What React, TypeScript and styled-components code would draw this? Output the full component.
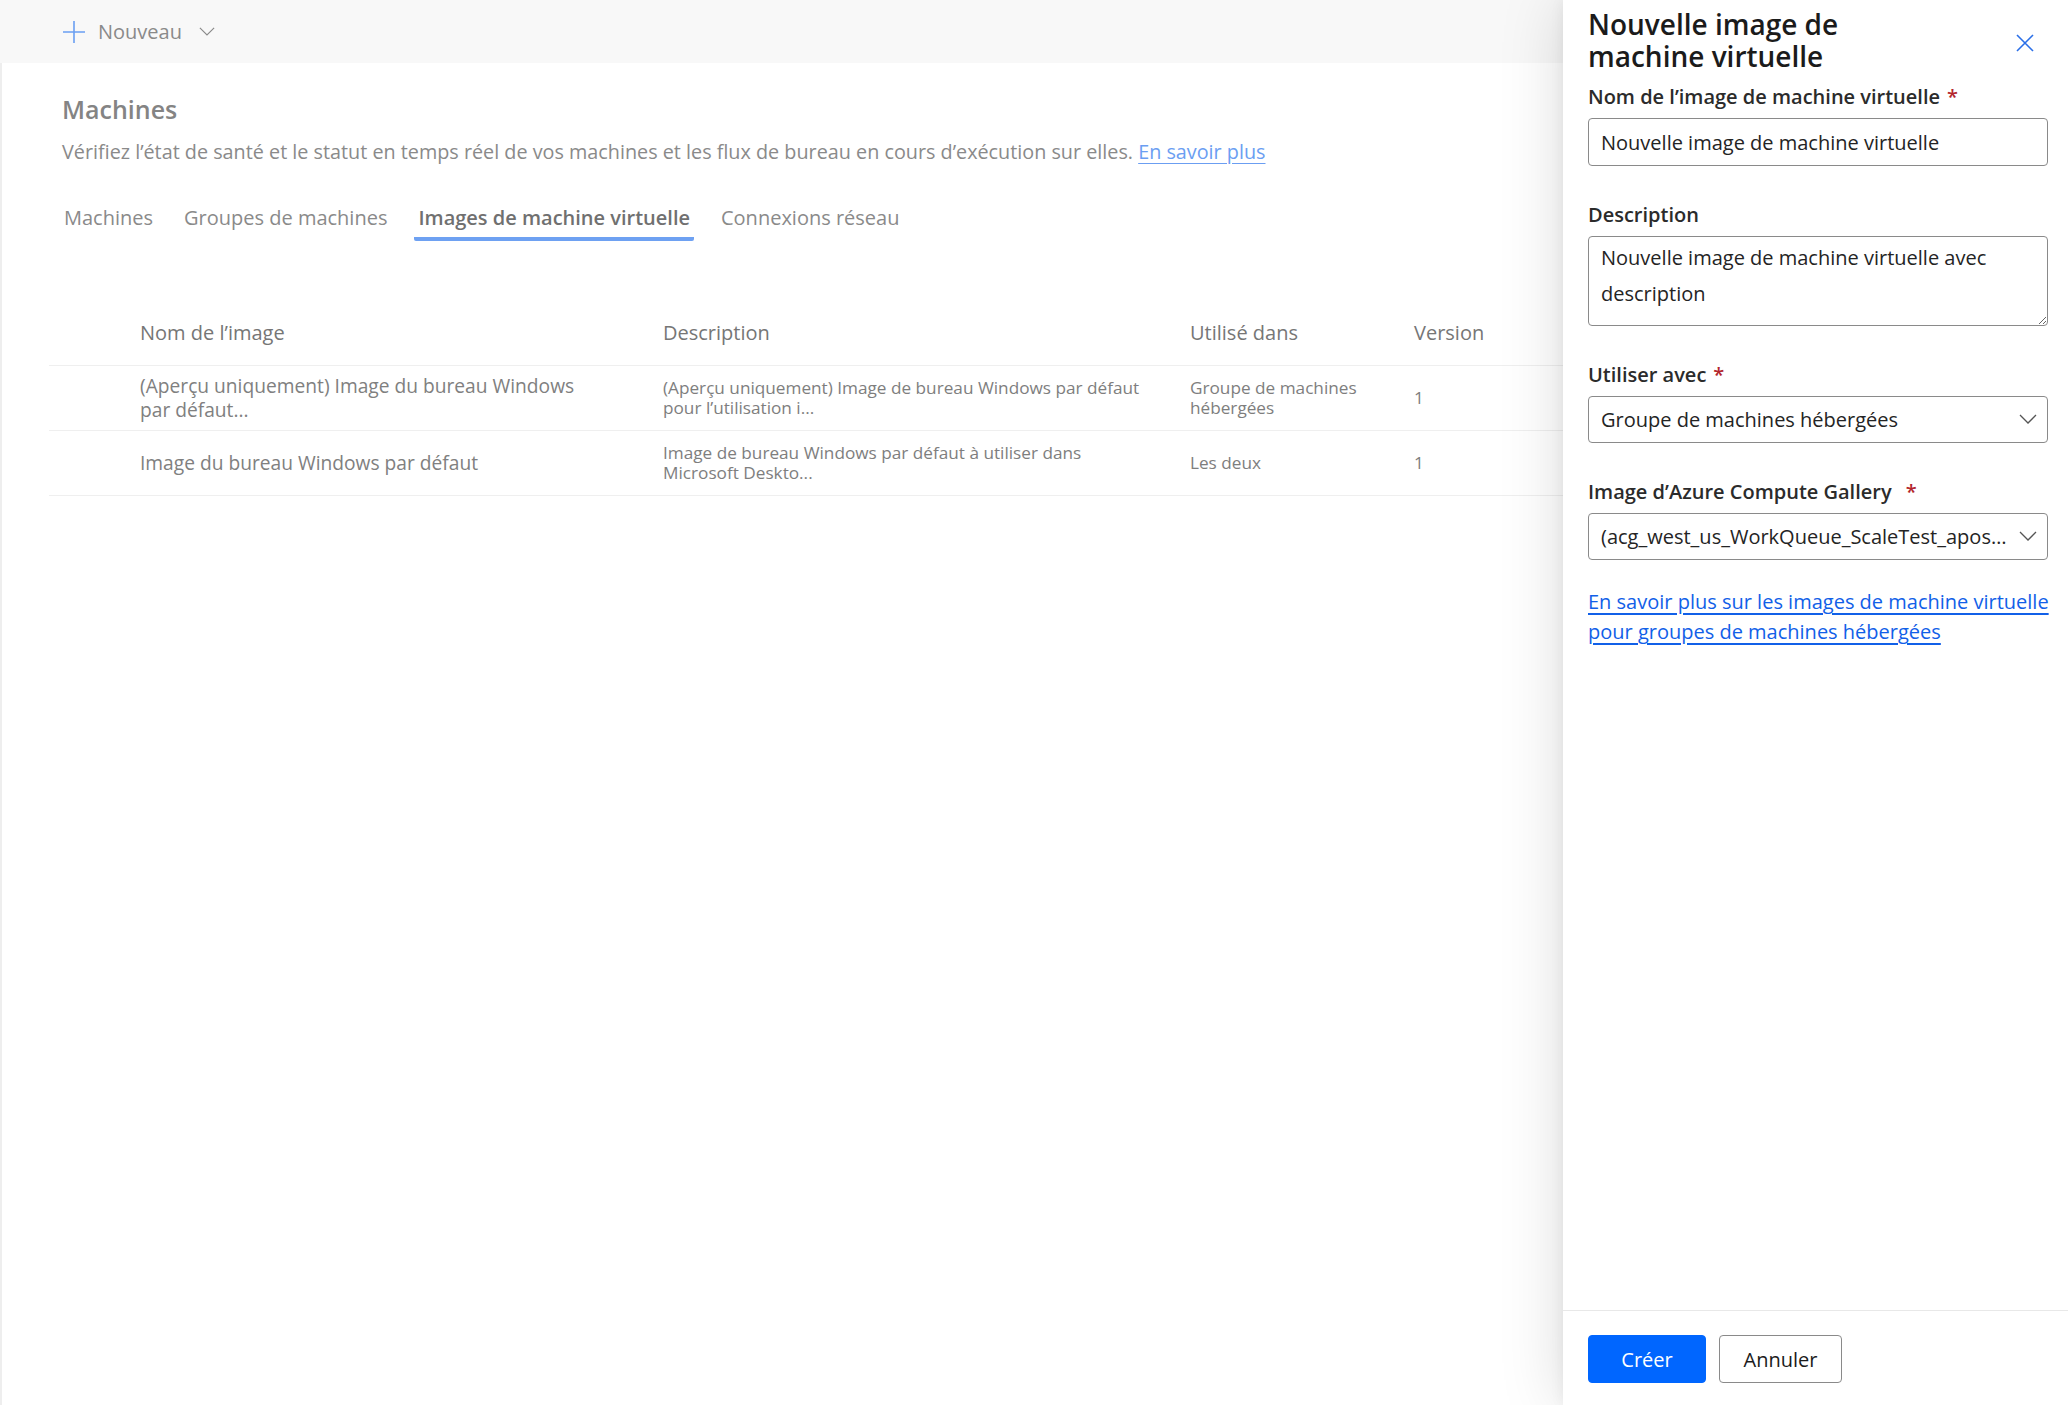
import styled, { createGlobalStyle } from "styled-components";

const GlobalStyle = createGlobalStyle`
  html, body {
    margin: 0;
    padding: 0;
  }
  body {
    font-family: "Open Sans", "Noto Sans", sans-serif;
    background: #ffffff;
    overflow: hidden;
  }
  * {
    box-sizing: border-box;
  }
`;

const Page = styled.div`
  position: relative;
  width: 2068px;
  height: 1405px;
  overflow: hidden;
  display: flex;
  flex-direction: column;
`;

const CommandBar = styled.div`
  height: 63px;
  flex-shrink: 0;
  background: #f8f8f8;
  display: flex;
  align-items: center;
  padding-left: 62px;
`;

const NewButton = styled.button`
  display: flex;
  align-items: center;
  gap: 12px;
  background: none;
  border: none;
  padding: 0;
  font-family: inherit;
  font-size: 20px;
  color: #8a8a8a;
  cursor: pointer;
  svg:last-child {
    margin-left: 5px;
  }
`;

const Content = styled.main`
  flex: 1;
  border-left: 2px solid #eeeeee;
  padding: 28px 0 0 47px;
`;

const Heading = styled.h1`
  margin: 0;
  padding-left: 13px;
  font-size: 25px;
  line-height: 36px;
  font-weight: 600;
  color: #848484;
`;

const Intro = styled.p`
  margin: 10px 0 0;
  padding-left: 13px;
  font-size: 19.8px;
  line-height: 30px;
  color: #8a8a8a;
  a {
    color: #6b9ef2;
    text-decoration: underline;
    text-underline-offset: 4px;
  }
`;

const Tabs = styled.nav`
  display: flex;
  gap: 23px;
  margin-top: 36px;
  padding-left: 11px;
`;

const Tab = styled.div<{ $active?: boolean }>`
  padding: 0 4px 4px;
  font-size: 20px;
  line-height: 30px;
  font-weight: ${(p) => (p.$active ? 600 : 400)};
  color: ${(p) => (p.$active ? "#707070" : "#8a8a8a")};
  border-bottom: 4px solid ${(p) => (p.$active ? "#6ea1f2" : "transparent")};
  border-radius: 0 0 2px 2px;
`;

const Table = styled.div`
  margin-top: 59px;
`;

const Row = styled.div<{ $head?: boolean }>`
  display: grid;
  grid-template-columns: 91px 523px 527px 224px 1fr;
  align-items: center;
  height: ${(p) => (p.$head ? "66px" : "65px")};
  border-bottom: 1px solid #efefef;
`;

const HeadCell = styled.div`
  font-size: 20px;
  font-weight: 500;
  color: #767676;
`;

const NameCell = styled.div`
  font-size: 19.2px;
  line-height: 24px;
  color: #808080;
`;

const SmallCell = styled.div`
  font-size: 17.2px;
  line-height: 20px;
  color: #7e7e7e;
`;

const Panel = styled.aside`
  position: absolute;
  top: 0;
  right: 0;
  bottom: 0;
  width: 505px;
  background: #ffffff;
  box-shadow: 0 0 60px rgba(0, 0, 0, 0.15), 0 0 14px rgba(0, 0, 0, 0.06);
  display: flex;
  flex-direction: column;
`;

const PanelHeader = styled.div`
  display: flex;
  align-items: flex-start;
  justify-content: space-between;
  padding: 8px 30px 0 25px;
`;

const PanelTitle = styled.h2`
  margin: 0;
  font-size: 28px;
  line-height: 32px;
  font-weight: 600;
  color: #1b1b1b;
`;

const CloseButton = styled.button`
  margin-top: 22px;
  background: none;
  border: none;
  padding: 4px;
  cursor: pointer;
  display: flex;
`;

const PanelBody = styled.div`
  flex: 1;
  padding: 11px 20px 0 25px;
  display: flex;
  flex-direction: column;
  gap: 35px;
`;

const Field = styled.div`
  display: flex;
  flex-direction: column;
  gap: 7px;
`;

const Label = styled.label<{ $starGap?: number }>`
  font-size: 20px;
  line-height: 28px;
  font-weight: 600;
  color: #2b2b2b;
  span {
    color: #b3262d;
    margin-left: ${(p) => p.$starGap ?? 7}px;
  }
`;

const TextInput = styled.input`
  height: 48px;
  border: 1px solid #8a8a8a;
  border-radius: 4px;
  padding: 0 12px;
  font-family: inherit;
  font-size: 20px;
  color: #242424;
  outline: none;
`;

const TextArea = styled.textarea`
  height: 90px;
  border: 1px solid #8a8a8a;
  border-radius: 4px;
  padding: 3px 12px;
  font-family: inherit;
  font-size: 20px;
  line-height: 36px;
  color: #242424;
  resize: vertical;
  outline: none;
`;

const Select = styled.div`
  height: 47px;
  border: 1px solid #8a8a8a;
  border-radius: 4px;
  padding: 0 10px 0 12px;
  display: flex;
  align-items: center;
  justify-content: space-between;
  gap: 10px;
  font-size: 20px;
  color: #242424;
  span {
    white-space: nowrap;
    overflow: hidden;
    text-overflow: ellipsis;
  }
  svg {
    flex-shrink: 0;
  }
`;

const HelpLink = styled.a`
  margin: -8px -10px 0 0;
  font-size: 20px;
  line-height: 30px;
  color: #1160e8;
  text-decoration: underline;
  text-underline-offset: 4px;
`;

const PanelFooter = styled.div`
  height: 95px;
  border-top: 1px solid #e8e8e8;
  padding: 24px 25px 0;
  display: flex;
  gap: 13px;
`;

const Button = styled.button<{ $primary?: boolean }>`
  height: 48px;
  min-width: ${(p) => (p.$primary ? "118px" : "123px")};
  border-radius: 4px;
  border: 1px solid ${(p) => (p.$primary ? "#0066ff" : "#8a8a8a")};
  background: ${(p) => (p.$primary ? "#0066ff" : "#ffffff")};
  color: ${(p) => (p.$primary ? "#ffffff" : "#1b1b1b")};
  font-family: inherit;
  font-size: 20px;
  padding: 0 18px;
  cursor: pointer;
`;

const PlusIcon = () => (
  <svg width="24" height="24" viewBox="0 0 24 24">
    <path d="M12 1v22M1 12h22" stroke="#6a9ff2" strokeWidth="1.6" fill="none" />
  </svg>
);

const Chevron = ({ color, size }: { color: string; size: number }) => (
  <svg width={size} height={size * 0.56} viewBox="0 0 18 10">
    <path d="M1 1l8 8 8-8" stroke={color} strokeWidth="1.3" fill="none" />
  </svg>
);

const CloseIcon = () => (
  <svg width="18" height="18" viewBox="0 0 18 18">
    <path d="M1 1l16 16M17 1L1 17" stroke="#2a6fe8" strokeWidth="1.6" fill="none" />
  </svg>
);

const images = [
  {
    name: ["(Aperçu uniquement) Image du bureau Windows", "par défaut..."],
    description: ["(Aperçu uniquement) Image de bureau Windows par défaut", "pour l’utilisation i..."],
    usedIn: ["Groupe de machines", "hébergées"],
    version: "1",
  },
  {
    name: ["Image du bureau Windows par défaut"],
    description: ["Image de bureau Windows par défaut à utiliser dans", "Microsoft Deskto..."],
    usedIn: ["Les deux"],
    version: "1",
  },
];

const Lines = ({ lines }: { lines: string[] }) => (
  <>
    {lines.map((l, i) => (
      <div key={i}>{l}</div>
    ))}
  </>
);

export default function App() {
  return (
    <>
      <GlobalStyle />
      <Page>
        <CommandBar>
          <NewButton>
            <PlusIcon />
            Nouveau
            <Chevron color="#8a8a8a" size={16} />
          </NewButton>
        </CommandBar>
        <Content>
          <Heading>Machines</Heading>
          <Intro>
            Vérifiez l’état de santé et le statut en temps réel de vos machines et les flux de bureau en cours
            d’exécution sur elles. <a href="#">En savoir plus</a>
          </Intro>
          <Tabs>
            <Tab>Machines</Tab>
            <Tab>Groupes de machines</Tab>
            <Tab $active>Images de machine virtuelle</Tab>
            <Tab>Connexions réseau</Tab>
          </Tabs>
          <Table>
            <Row $head>
              <div />
              <HeadCell>Nom de l’image</HeadCell>
              <HeadCell>Description</HeadCell>
              <HeadCell>Utilisé dans</HeadCell>
              <HeadCell>Version</HeadCell>
            </Row>
            {images.map((img, i) => (
              <Row key={i}>
                <div />
                <NameCell>
                  <Lines lines={img.name} />
                </NameCell>
                <SmallCell>
                  <Lines lines={img.description} />
                </SmallCell>
                <SmallCell>
                  <Lines lines={img.usedIn} />
                </SmallCell>
                <SmallCell>{img.version}</SmallCell>
              </Row>
            ))}
          </Table>
        </Content>

        <Panel>
          <PanelHeader>
            <PanelTitle>
              Nouvelle image de
              <br />
              machine virtuelle
            </PanelTitle>
            <CloseButton aria-label="Fermer">
              <CloseIcon />
            </CloseButton>
          </PanelHeader>
          <PanelBody>
            <Field>
              <Label>
                Nom de l’image de machine virtuelle<span>*</span>
              </Label>
              <TextInput defaultValue="Nouvelle image de machine virtuelle" />
            </Field>
            <Field>
              <Label>Description</Label>
              <TextArea defaultValue="Nouvelle image de machine virtuelle avec description" />
            </Field>
            <Field>
              <Label>
                Utiliser avec<span>*</span>
              </Label>
              <Select>
                <span>Groupe de machines hébergées</span>
                <Chevron color="#555555" size={18} />
              </Select>
            </Field>
            <Field>
              <Label $starGap={14}>
                Image d’Azure Compute Gallery<span>*</span>
              </Label>
              <Select>
                <span>(acg_west_us_WorkQueue_ScaleTest_apostrophe_image)</span>
                <Chevron color="#555555" size={18} />
              </Select>
            </Field>
            <HelpLink href="#">
              En savoir plus sur les images de machine virtuelle pour groupes de machines hébergées
            </HelpLink>
          </PanelBody>
          <PanelFooter>
            <Button $primary>Créer</Button>
            <Button>Annuler</Button>
          </PanelFooter>
        </Panel>
      </Page>
    </>
  );
}
